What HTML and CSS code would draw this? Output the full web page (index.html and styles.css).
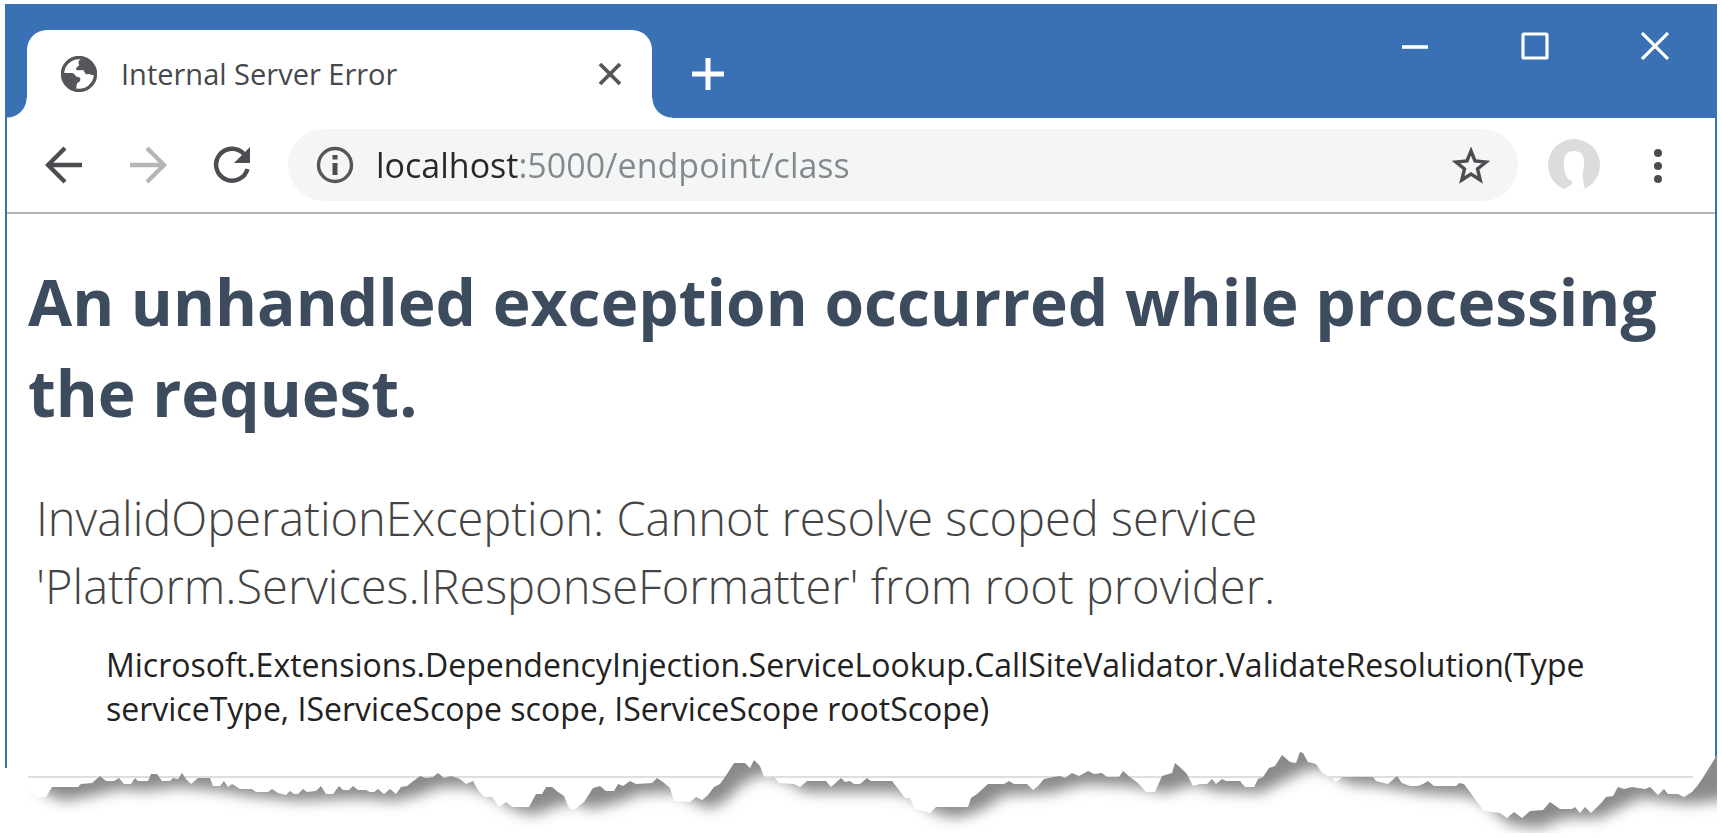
FILE: index.html
```html
<!DOCTYPE html>
<html lang="en">
<head>
<meta charset="utf-8">
<meta name="viewport" content="width=device-width, initial-scale=1">
<title>Internal Server Error</title>
<link rel="stylesheet" href="styles.css">
</head>
<body>
<div class="window">
  <header class="titlebar">
    <div class="tab">
      <svg class="tab-icon" viewBox="0 0 36 36" aria-hidden="true">
        <circle cx="18" cy="18" r="16.5" fill="#fff" stroke="#54565a" stroke-width="3.4"/>
        <path d="M20 3c-3 2-3 4-2 5 1 2-3 3-3 5 0 2 4 1 6 1 3 0 2 3 4 4 3 1 4-1 5 1l4 0c1-8-4-15-14-16z" fill="#54565a"/>
        <path d="M2 17h9c3 0 3 4 6 4 3 0 3 4 1 5-3 1-2 4-3 7C7 32 2 25 2 17z" fill="#54565a"/>
      </svg>
      <span class="tab-title">Internal Server Error</span>
      <button class="tab-close" type="button" aria-label="Close tab">
        <svg width="24" height="24" viewBox="0 0 24 24"><path d="M2 2l20 20M22 2L2 22" stroke="#54565a" stroke-width="3.8"/></svg>
      </button>
    </div>
    <button class="new-tab" type="button" aria-label="New tab">
      <svg width="32" height="32" viewBox="0 0 32 32"><path d="M16 0v32M0 16h32" stroke="#fff" stroke-width="5"/></svg>
    </button>
    <div class="window-controls">
      <button class="control" type="button" aria-label="Minimize">
        <svg width="28" height="28" viewBox="0 0 28 28"><path d="M1 15h26" stroke="#fff" stroke-width="3.6"/></svg>
      </button>
      <button class="control" type="button" aria-label="Maximize">
        <svg width="28" height="28" viewBox="0 0 28 28"><rect x="2" y="2" width="24" height="24" rx="1" fill="none" stroke="#fff" stroke-width="3.2"/></svg>
      </button>
      <button class="control" type="button" aria-label="Close">
        <svg width="28" height="28" viewBox="0 0 28 28"><path d="M1 1l26 26M27 1L1 27" stroke="#fff" stroke-width="3.2"/></svg>
      </button>
    </div>
  </header>

  <nav class="toolbar" aria-label="Navigation">
    <div class="tools">
      <button class="tool" type="button" aria-label="Back">
        <svg width="38" height="38" viewBox="0 0 38 38"><path d="M37 19H4M20 2L3 19l17 17" fill="none" stroke="#4b4d51" stroke-width="4.4"/></svg>
      </button>
      <button class="tool" type="button" aria-label="Forward">
        <svg width="38" height="38" viewBox="0 0 38 38"><path d="M1 19h33M18 2l17 17-17 17" fill="none" stroke="#b5b5b7" stroke-width="4.4"/></svg>
      </button>
      <button class="tool" type="button" aria-label="Reload">
        <svg width="38" height="38" viewBox="0 0 38 38"><path d="M34.500 23A16 16 0 1 1 31 8" fill="none" stroke="#4b4d51" stroke-width="4.400"/><path d="M37 1v16H21z" fill="#4b4d51"/></svg>
      </button>
    </div>
    <form class="omnibox">
      <svg width="38" height="38" viewBox="0 0 38 38" aria-hidden="true"><circle cx="19" cy="19" r="16.500" fill="none" stroke="#54565a" stroke-width="3.400"/><path d="M19 9v4.500M19 17v12" stroke="#4b4d51" stroke-width="5"/></svg>
      <input class="address" type="text" value="localhost:5000/endpoint/class" aria-label="Address" spellcheck="false">
      <button class="star" type="button" aria-label="Bookmark">
        <svg width="38" height="38" viewBox="0 0 38 38"><path d="M19 5l4 10 11 1-8.500 7 2.700 11L19 28l-9.200 6 2.700-11L4 16l11-1z" fill="none" stroke="#4b4d51" stroke-width="3.400"/></svg>
      </button>
    </form>
    <div class="tools">
      <button class="tool" type="button" aria-label="Profile">
        <svg width="52" height="52" viewBox="0 0 52 52"><circle cx="26" cy="26" r="26" fill="#dcdcde"/><path d="M16 26c-1-9 3-14 10-14s11 5 10 13c0 5-2 9-1 13 0 5 1 9 2 11-7 4-15 4-21 1 5-3 9-4 8-8-5-1-8-8-8-16z" fill="#fff"/></svg>
      </button>
      <button class="tool" type="button" aria-label="Menu">
        <svg width="10" height="36" viewBox="0 0 10 36"><g fill="#4b4d51"><circle cx="5" cy="6" r="4"/><circle cx="5" cy="19" r="4"/><circle cx="5" cy="32" r="4"/></g></svg>
      </button>
    </div>
  </nav>

  <main class="page">
    <h1 class="headline">An unhandled exception occurred while processing the request.</h1>
    <h2 class="exception">InvalidOperationException: Cannot resolve scoped service 'Platform.Services.IResponseFormatter' from root provider.</h2>
    <p class="frame">Microsoft.Extensions.DependencyInjection.ServiceLookup.CallSiteValidator.ValidateResolution(Type serviceType, IServiceScope scope, IServiceScope rootScope)</p>
  </main>
</div>

<div class="tear">
  <hr class="rule">
  <svg class="tear-art" viewBox="0 0 1722 118" preserveAspectRatio="none" aria-hidden="true">
    <defs>
      <clipPath id="below-edge">
        <path id="edge" d="M24 66L36 78 46 77 52 67 78 67 81 64 92 63 100 56 106 61 114 61 119 58 124 64 131 64 135 58 138 61 148 61 151 54 157 54 162 61 170 61 173 58 178 59 182 53 186 59 191 64 198 58 210 58 213 66 220 66 224 61 228 67 232 64 240 69 252 69 256 72 268 72 272 69 278 73 286 75 290 71 294 74 298 74 303 69 307 72 316 71 321 66 326 74 333 74 339 66 343 70 349 70 353 66 358 70 366 70 370 72 374 72 378 69 384 74 390 69 396 74 401 67 407 66 412 62 420 56 426 58 433 57 438 53 444 58 451 56 460 59 466 64 473 61 478 70 484 77 492 77 499 87 506 82 512 87 529 87 536 74 542 74 546 67 552 67 558 72 564 76 569 88 574 90 584 82 593 68 600 66 606 71 614 71 618 64 623 66 630 61 636 64 652 63 657 58 663 62 670 68 674 81 690 82 696 77 702 80 708 75 714 67 720 64 727 54 734 43 745 43 750 48 754 40 760 46 764 57 770 58 774 57 779 63 794 64 800 67 807 61 826 61 831 67 841 58 845 62 850 61 854 64 860 64 867 58 871 61 892 61 899 70 905 78 910 78 915 89 924 91 930 93 936 87 968 87 971 78 977 74 988 64 1004 64 1009 61 1014 64 1027 64 1033 70 1038 66 1044 59 1053 57 1060 56 1065 58 1072 53 1079 56 1088 51 1094 54 1102 53 1107 57 1119 57 1123 51 1130 57 1138 63 1146 72 1155 72 1162 56 1172 53 1175 43 1182 49 1187 54 1193 66 1200 64 1207 64 1212 59 1216 64 1222 59 1226 61 1240 61 1245 67 1254 67 1258 59 1263 57 1269 48 1275 46 1282 35 1290 42 1296 43 1300 32 1303 33 1308 42 1316 44 1322 53 1332 58 1336 62 1342 57 1373 57 1376 61 1388 64 1397 56 1402 63 1410 66 1418 66 1423 64 1428 61 1434 66 1456 66 1459 63 1464 64 1475 79 1484 91 1500 93 1507 98 1514 92 1522 98 1530 91 1543 90 1550 82 1560 89 1572 89 1575 87 1580 93 1585 87 1591 93 1602 82 1606 77 1613 76 1618 67 1624 69 1632 67 1645 69 1650 67 1658 75 1664 69 1668 74 1678 74 1684 77 1692 72 1698 65 1704 56 1717 35V113H24z"/>
      </clipPath>
      <filter id="soften" x="-5%" y="-50%" width="110%" height="200%"><feGaussianBlur stdDeviation="7"/></filter>
    </defs>
    <use href="#edge" fill="#fff"/>
    <g clip-path="url(#below-edge)">
      <path filter="url(#soften)" fill="#8a8a8a" d="M36 10V66L50 76 65 81 90 76 120 69 145 71 180 67 215 70 250 76 300 81 360 78 395 81 420 75 440 67 470 67 490 75 515 90 533 95 555 87 572 82 592 89 620 82 640 74 675 72 695 82 710 89 725 81 745 62 765 54 790 63 805 72 860 72 895 72 915 78 935 93 955 98 980 91 1005 75 1050 73 1085 64 1130 66 1165 73 1195 64 1215 71 1260 73 1290 58 1312 48 1330 52 1350 64 1380 66 1420 73 1470 76 1490 87 1510 105 1540 108 1565 98 1600 98 1640 78 1690 84 1740 78V10z"/>
    </g>
  </svg>
</div>
</body>
</html>
```
FILE: styles.css
```css
* {
  box-sizing: border-box;
}

body {
  margin: 0;
  padding: 4px 5px 0;
  background: #fff;
  color: #222;
  font-family: "Open Sans", "Noto Sans", sans-serif;
}

button {
  display: flex;
  align-items: center;
  justify-content: center;
  padding: 0;
  border: 0;
  background: none;
}

svg {
  display: block;
  flex: none;
}

.window {
  border: solid #3a71b5;
  border-width: 0 2px;
}

/* Title bar */
.titlebar {
  display: flex;
  align-items: flex-end;
  height: 114px;
  padding-left: 20px;
  background: #3a71b5;
}

.tab {
  position: relative;
  display: flex;
  align-items: center;
  flex: 0 1 625px;
  height: 88px;
  padding: 0 24px 0 34px;
  border-radius: 20px 20px 0 0;
  background: #fff;
}

.tab::before,
.tab::after {
  content: "";
  position: absolute;
  bottom: 0;
  width: 20px;
  height: 20px;
}

.tab::before {
  right: 100%;
  background: radial-gradient(circle at 0 0, transparent 19px, #fff 20px);
}

.tab::after {
  left: 100%;
  background: radial-gradient(circle at 100% 0, transparent 19px, #fff 20px);
}

.tab-icon {
  width: 36px;
  height: 36px;
}

.tab-title {
  flex: 1;
  padding-left: 24px;
  font-size: 29px;
  line-height: 40px;
  color: #45484d;
  white-space: nowrap;
}

.tab-close {
  width: 36px;
  height: 36px;
}

.new-tab {
  width: 60px;
  height: 88px;
  margin-left: 26px;
}

.window-controls {
  display: flex;
  align-self: flex-start;
  margin-left: auto;
}

.control {
  width: 120px;
  height: 84px;
}

/* Toolbar */
.toolbar {
  display: flex;
  align-items: center;
  gap: 14px;
  height: 96px;
  padding: 0 15px;
  border-bottom: 2px solid #b4b4b4;
}

.tools {
  display: flex;
}

.tool {
  width: 84px;
  height: 72px;
}

.omnibox {
  display: flex;
  align-items: center;
  flex: 1;
  height: 72px;
  padding: 0 28px;
  border-radius: 36px;
  background: #f4f6f6;
}

.address {
  flex: 1;
  min-width: 0;
  height: 48px;
  margin: 0 22px;
  padding: 0;
  border: 0;
  outline: 0;
  font: 34px "Open Sans", "Noto Sans", sans-serif;
  color: transparent;
  background: linear-gradient(90deg, #26282c 142px, #85898f 142px);
  -webkit-background-clip: text;
  background-clip: text;
}

.star {
  width: 38px;
  height: 38px;
}

/* Error page */
.page {
  padding: 42px 21px 37px;
}

.headline {
  margin: 0;
  font-size: 64px;
  font-weight: 700;
  line-height: 91px;
  color: #3c4c5e;
}

.exception {
  max-width: 1300px;
  margin: 46px 0 0 8px;
  font-size: 47px;
  font-weight: 300;
  line-height: 68px;
  color: #444;
}

.frame {
  margin: 23px 0 0 78px;
  font-size: 32px;
  line-height: 44px;
}

/* Torn bottom edge */
.tear {
  position: relative;
  height: 118px;
  margin: -48px -5px 0;
  padding: 56px 29px 0 28px;
}

.rule {
  margin: 0;
  border: 0;
  border-top: 2px solid #dedede;
}

.tear-art {
  position: absolute;
  inset: 0;
  width: 100%;
  height: 100%;
}
```
